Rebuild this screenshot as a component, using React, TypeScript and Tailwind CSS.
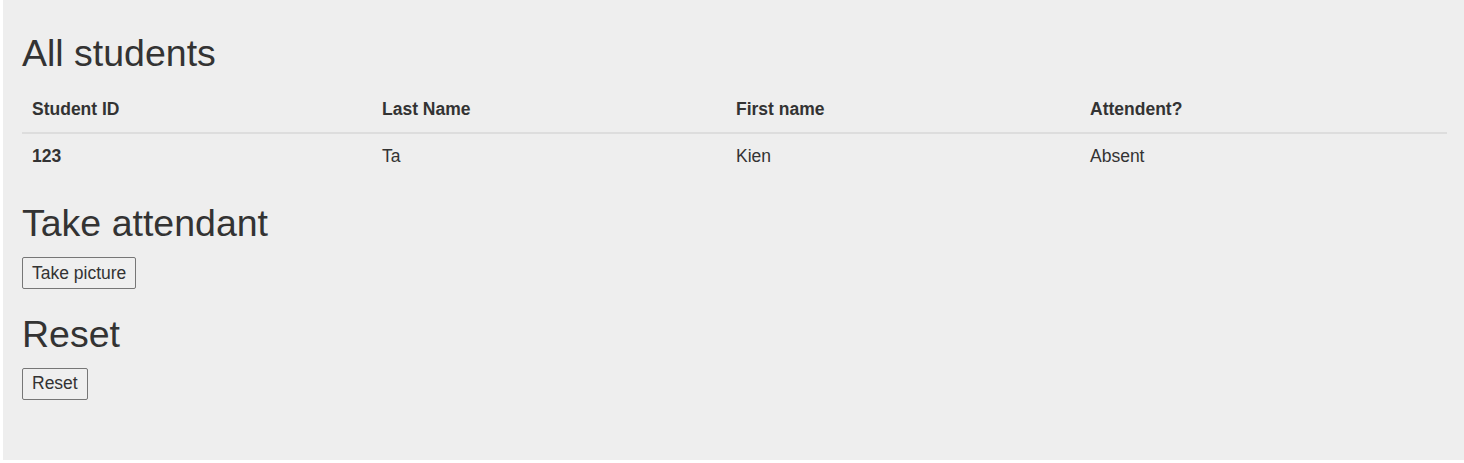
const students = [
  { id: "123", lastName: "Ta", firstName: "Kien", attendant: "Absent" },
];

const Heading = ({ children, className = "" }: { children: React.ReactNode; className?: string }) => (
  <h2 className={`text-[37.5px] leading-[41.25px] font-normal text-[#333] ${className}`}>{children}</h2>
);

const ActionButton = ({ label }: { label: string }) => (
  <button className="h-[32px] px-[9px] border border-[#767676] rounded-[2px] bg-[#efefef] text-[17.5px] leading-[25px] text-[#333]">
    {label}
  </button>
);

export default function App() {
  return (
    <div className="bg-white font-['Liberation_Sans',Arial,sans-serif] text-[#333]">
      <div className="ml-[3px] h-[460px] bg-[#eeeeee] pt-[33px] pl-[19px] pr-[17px]">
        <Heading className="mb-[13px]">All students</Heading>
        <table className="w-full border-collapse text-[17.5px] leading-[25px]">
          <thead>
            <tr className="border-b-2 border-[#dddddd]">
              <th className="w-[350px] pt-[10px] pb-[10px] px-[10px] text-left font-bold">Student ID</th>
              <th className="w-[354px] pt-[10px] pb-[10px] px-[10px] text-left font-bold">Last Name</th>
              <th className="w-[354px] pt-[10px] pb-[10px] px-[10px] text-left font-bold">First name</th>
              <th className="pt-[10px] pb-[10px] px-[10px] text-left font-bold">Attendent?</th>
            </tr>
          </thead>
          <tbody>
            {students.map((s) => (
              <tr key={s.id}>
                <td className="pt-[10px] pb-[10px] px-[10px] font-bold">{s.id}</td>
                <td className="pt-[10px] pb-[10px] px-[10px]">{s.lastName}</td>
                <td className="pt-[10px] pb-[10px] px-[10px]">{s.firstName}</td>
                <td className="pt-[10px] pb-[10px] px-[10px]">{s.attendant}</td>
              </tr>
            ))}
          </tbody>
        </table>
        <Heading className="mt-[24px] mb-[12.5px]">Take attendant</Heading>
        <ActionButton label="Take picture" />
        <Heading className="mt-[25px] mb-[12.5px]">Reset</Heading>
        <ActionButton label="Reset" />
      </div>
    </div>
  );
}
